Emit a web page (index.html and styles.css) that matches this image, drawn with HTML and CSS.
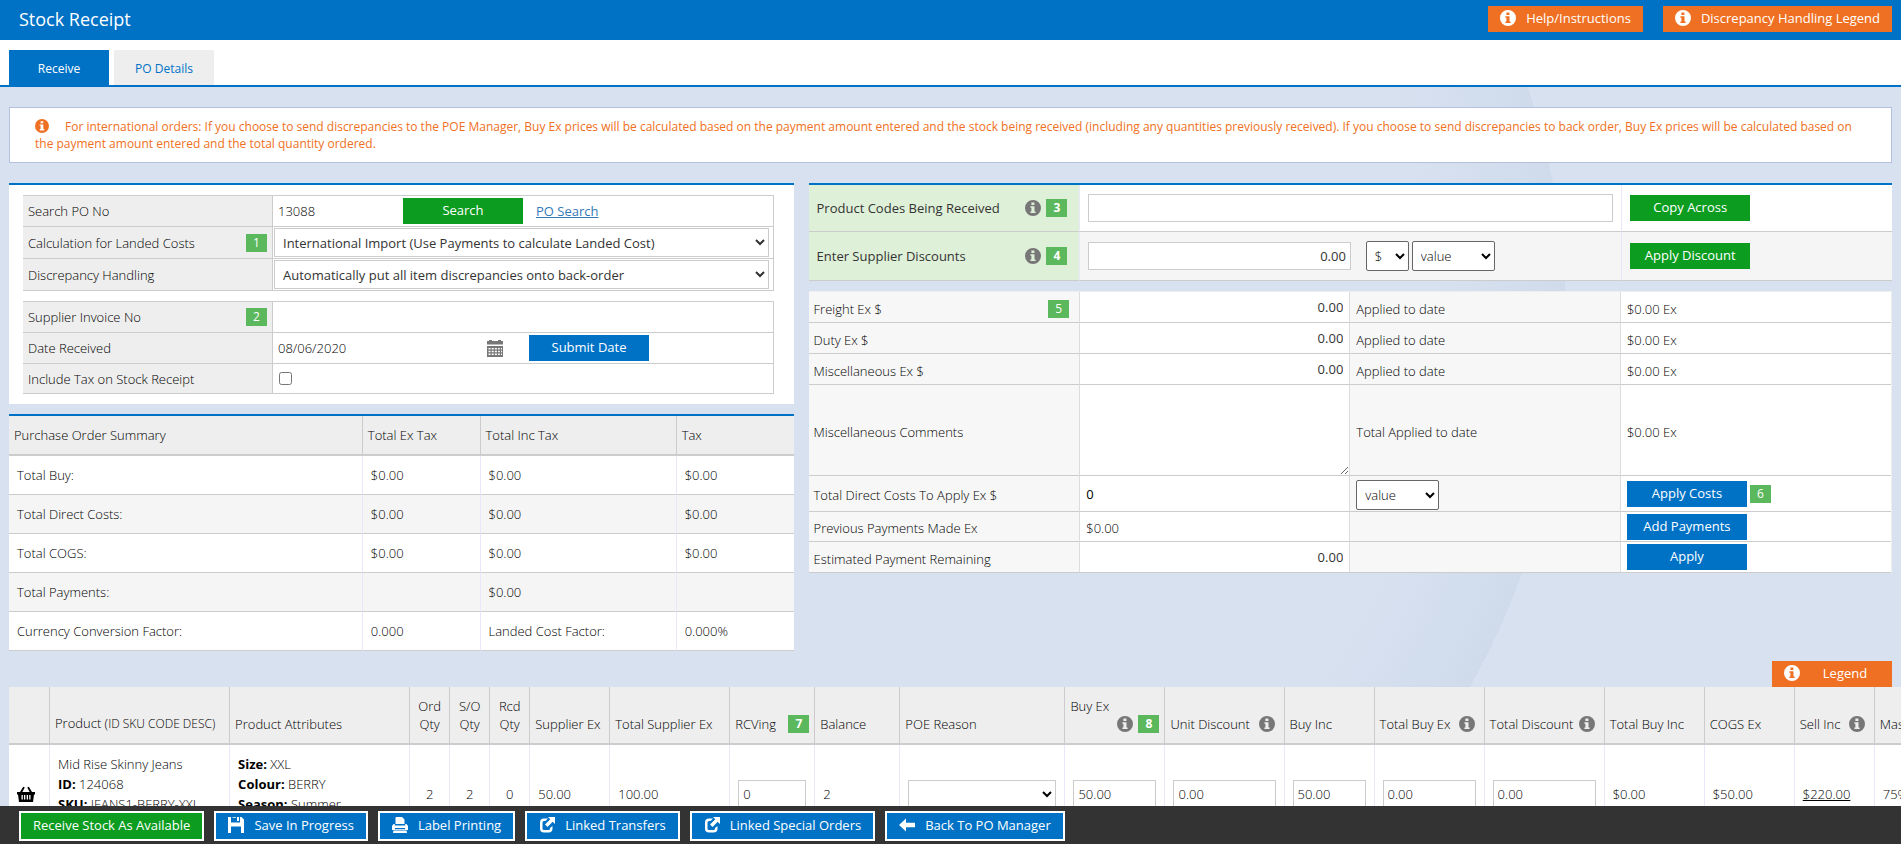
FILE: index.html
```html
<!DOCTYPE html>
<html lang="en">
<head>
<meta charset="utf-8">
<title>Stock Receipt</title>
<link rel="stylesheet" href="styles.css">
</head>
<body>
<svg class="defs" aria-hidden="true">
  <symbol id="i-info" viewBox="0 0 16 16"><path fill-rule="evenodd" d="M8 0a8 8 0 1 1 0 16A8 8 0 0 1 8 0zM6.4 2.6v2.3h3V2.6zM5.4 6.3v1.4h1v3.8h-1V13h5.2v-1.500h-1.100V6.300z"/></symbol>
  <symbol id="i-save" viewBox="0 0 16 16"><path fill-rule="evenodd" d="M0 0h3v5.500h9V0h1.500L16 2.500V16h-3V9.500H3V16H0zM9 0h2v4H9zM4.500 0H8v.8H4.500z"/></symbol>
  <symbol id="i-print" viewBox="0 0 16 16"><path fill-rule="evenodd" d="M4 0h6l2.500 2.500V7h-9V1zM1.500 7h1.300v1.500h10.400V7h1.300L16 9v4H0V9zM3 11v1.200h10V11zM1.500 13.500h13L15 16H1z"/></symbol>
  <symbol id="i-share" viewBox="0 0 16 16"><path d="M9 1.500H5Q1 1.500 1 5.500v6Q1 15.500 5 15.500h4.500q4 0 4-4V9l-2.500 2v.5q0 1.500-1.500 1.500H5q-1.500 0-1.500-1.500v-6Q3.500 4 5 4h1.500zM9 0h7v7l-2.300-2.300L8.500 10 6 7.500l5.300-5.200z"/></symbol>
  <symbol id="i-back" viewBox="0 0 16 16"><path d="M0 8l7-6.500v4.300h9v4.400H7v4.300z"/></symbol>
  <symbol id="i-cal" viewBox="0 0 16 17"><path fill-rule="evenodd" d="M0 1h2V0h3v1h6V0h3v1h2v3.500H0zM0 6h16v11H0zM1.500 8v1.500h2V8zM4.700 8v1.500h2V8zM7.900 8v1.500h2V8zM11.100 8v1.500h1.700V8zM14 8v1.500h1V8zM1.500 10.700v1.500h2v-1.500zM4.700 10.700v1.500h2v-1.500zM7.900 10.700v1.500h2v-1.500zM11.100 10.700v1.500h1.700v-1.500zM14 10.700v1.500h1v-1.500zM1.500 13.400v1.500h2v-1.500zM4.700 13.400v1.500h2v-1.500zM7.900 13.400v1.500h2v-1.500zM11.100 13.400v1.500h1.700v-1.500zM14 13.400v1.500h1v-1.500z"/></symbol>
  <symbol id="i-basket" viewBox="0 0 18 16"><path fill-rule="evenodd" d="M0 6h3L6.200.8 7.800 1.600 5.300 6h7.400L10.200 1.600 11.800.8 15 6h3v2.500h-1L16 16H2L1 8.500H0zM4.500 9v4.500h1.300V9zM7 9v4.500h1.300V9zM9.700 9v4.500H11V9zM12.200 9v4.500h1.300V9z"/></symbol>
</svg>

<div class="page">
  <header class="topbar">
    <h1>Stock Receipt</h1>
    <div class="topbar-actions">
      <button class="btn orange"><svg class="ico"><use href="#i-info"/></svg>Help/Instructions</button>
      <button class="btn orange"><svg class="ico"><use href="#i-info"/></svg>Discrepancy Handling Legend</button>
    </div>
  </header>
  <nav class="tabs">
    <a href="#receive" class="tab active">Receive</a>
    <a href="#details" class="tab">PO Details</a>
  </nav>

  <main class="content">
    <p class="notice"><svg class="ico"><use href="#i-info"/></svg>For international orders: If you choose to send discrepancies to the POE Manager, Buy Ex prices will be calculated based on the payment amount entered and the stock being received (including any quantities previously received). If you choose to send discrepancies to back order, Buy Ex prices will be calculated based on the payment amount entered and the total quantity ordered.</p>

    <div class="columns">
      <div class="left">
        <section class="panel">
          <table class="form">
            <tr>
              <td class="lbl"><label for="po">Search PO No</label></td>
              <td><div class="line"><input id="po" class="bare po" value="13088"><button class="btn green wide">Search</button><a class="link" href="#search">PO Search</a></div></td>
            </tr>
            <tr class="tall">
              <td class="lbl"><label for="calc">Calculation for Landed Costs</label><span class="badge">1</span></td>
              <td><select id="calc" class="full"><option>International Import (Use Payments to calculate Landed Cost)</option></select></td>
            </tr>
            <tr class="tall">
              <td class="lbl"><label for="disc">Discrepancy Handling</label></td>
              <td><select id="disc" class="full"><option>Automatically put all item discrepancies onto back-order</option></select></td>
            </tr>
          </table>
          <table class="form">
            <tr>
              <td class="lbl"><label for="inv">Supplier Invoice No</label><span class="badge">2</span></td>
              <td><input id="inv" class="bare"></td>
            </tr>
            <tr>
              <td class="lbl"><label for="date">Date Received</label></td>
              <td><div class="line"><input id="date" class="bare date" value="08/06/2020"><svg class="cal"><use href="#i-cal"/></svg><button class="btn blue wide">Submit Date</button></div></td>
            </tr>
            <tr class="short">
              <td class="lbl"><label for="tax">Include Tax on Stock Receipt</label></td>
              <td><input id="tax" type="checkbox" class="check"></td>
            </tr>
          </table>
        </section>

        <table class="summary">
          <thead><tr><th class="s1">Purchase Order Summary</th><th class="s2">Total Ex Tax</th><th class="s3">Total Inc Tax</th><th>Tax</th></tr></thead>
          <tbody>
            <tr><td>Total Buy:</td><td>$0.00</td><td>$0.00</td><td>$0.00</td></tr>
            <tr><td>Total Direct Costs:</td><td>$0.00</td><td>$0.00</td><td>$0.00</td></tr>
            <tr><td>Total COGS:</td><td>$0.00</td><td>$0.00</td><td>$0.00</td></tr>
            <tr><td>Total Payments:</td><td></td><td>$0.00</td><td></td></tr>
            <tr><td>Currency Conversion Factor:</td><td>0.000</td><td>Landed Cost Factor:</td><td>0.000%</td></tr>
          </tbody>
        </table>
      </div>

      <div class="right">
        <table class="codes">
          <tr>
            <td class="key"><div class="line"><label for="codes">Product Codes Being Received</label><svg class="ico grey"><use href="#i-info"/></svg><span class="badge bold">3</span></div></td>
            <td class="mid"><input id="codes" class="box"></td>
            <td class="act"><button class="btn green wide">Copy Across</button></td>
          </tr>
          <tr class="alt">
            <td class="key"><div class="line"><label for="supp">Enter Supplier Discounts</label><svg class="ico grey"><use href="#i-info"/></svg><span class="badge bold">4</span></div></td>
            <td class="mid"><div class="line"><input id="supp" class="box half" value="0.00"><select class="native cur" aria-label="Currency"><option>$</option></select><select class="native val" aria-label="Discount type"><option>value</option></select></div></td>
            <td class="act"><button class="btn green wide">Apply Discount</button></td>
          </tr>
        </table>

        <table class="costs">
          <tr><td class="k first"><div class="line"><label for="fr">Freight Ex $</label><span class="badge">5</span></div></td><td><input id="fr" class="bare num" value="0.00"></td><td class="k">Applied to date</td><td class="amt">$0.00 Ex</td></tr>
          <tr><td class="k first"><label for="du">Duty Ex $</label></td><td><input id="du" class="bare num" value="0.00"></td><td class="k">Applied to date</td><td class="amt">$0.00 Ex</td></tr>
          <tr><td class="k first"><label for="mi">Miscellaneous Ex $</label></td><td><input id="mi" class="bare num" value="0.00"></td><td class="k">Applied to date</td><td class="amt">$0.00 Ex</td></tr>
          <tr><td class="k first"><label for="mc">Miscellaneous Comments</label></td><td class="flush"><textarea id="mc"></textarea></td><td class="k">Total Applied to date</td><td class="amt">$0.00 Ex</td></tr>
          <tr class="r36"><td class="k first"><label for="td">Total Direct Costs To Apply Ex $</label></td><td><input id="td" class="bare dark" value="0"></td><td class="k"><select class="native val" aria-label="Cost type"><option>value</option></select></td><td><div class="line"><button class="btn blue wide">Apply Costs</button><span class="badge near">6</span></div></td></tr>
          <tr class="r30"><td class="k first">Previous Payments Made Ex</td><td class="amt">$0.00</td><td class="k"></td><td><button class="btn blue wide">Add Payments</button></td></tr>
          <tr><td class="k first"><label for="ep">Estimated Payment Remaining</label></td><td><input id="ep" class="bare num" value="0.00"></td><td class="k"></td><td><button class="btn blue wide">Apply</button></td></tr>
        </table>
      </div>
    </div>

    <div class="legend-row"><button class="btn orange legend"><svg class="ico"><use href="#i-info"/></svg><span>Legend</span></button></div>

    <div class="grid-wrap">
      <table class="grid">
        <colgroup><col class="w41"><col class="w180"><col class="w180"><col class="w40"><col class="w40"><col class="w40"><col class="w80"><col class="w120"><col class="w85"><col class="w85"><col class="w165"><col class="w100"><col class="w119"><col class="w90"><col class="w110"><col class="w120"><col class="w100"><col class="w90"><col class="w80"><col class="w100"></colgroup>
        <thead>
          <tr>
            <th></th><th>Product (<small>ID SKU CODE DESC)</small></th><th>Product Attributes</th>
            <th class="c">Ord<br>Qty</th><th class="c">S/O<br>Qty</th><th class="c">Rcd<br>Qty</th>
            <th>Supplier Ex</th><th>Total Supplier Ex</th>
            <th><div class="hd">RCVing<span class="badge bold">7</span></div></th><th>Balance</th><th>POE Reason</th>
            <th>Buy Ex<div class="hd end"><svg class="ico grey"><use href="#i-info"/></svg><span class="badge bold">8</span></div></th>
            <th><div class="hd">Unit Discount<svg class="ico grey"><use href="#i-info"/></svg></div></th><th>Buy Inc</th>
            <th><div class="hd">Total Buy Ex<svg class="ico grey"><use href="#i-info"/></svg></div></th>
            <th><div class="hd">Total Discount<svg class="ico grey"><use href="#i-info"/></svg></div></th>
            <th>Total Buy Inc</th><th>COGS Ex</th>
            <th><div class="hd">Sell Inc<svg class="ico grey"><use href="#i-info"/></svg></div></th><th>Mass</th>
          </tr>
        </thead>
        <tbody>
          <tr>
            <td><svg class="basket"><use href="#i-basket"/></svg></td>
            <td class="top">Mid Rise Skinny Jeans<br><b>ID:</b> 124068<br><b>SKU:</b> JEANS1-BERRY-XXL</td>
            <td class="top"><b>Size:</b> XXL<br><b>Colour:</b> BERRY<br><b>Season:</b> Summer</td>
            <td class="c">2</td><td class="c">2</td><td class="c">0</td><td>50.00</td><td>100.00</td>
            <td><input class="box" value="0" aria-label="Receiving"></td><td>2</td>
            <td><select class="box" aria-label="POE reason"><option></option></select></td>
            <td><input class="box" value="50.00" aria-label="Buy ex"></td>
            <td><input class="box" value="0.00" aria-label="Unit discount"></td>
            <td><input class="box" value="50.00" aria-label="Buy inc"></td>
            <td><input class="box" value="0.00" aria-label="Total buy ex"></td>
            <td><input class="box" value="0.00" aria-label="Total discount"></td>
            <td>$0.00</td><td>$50.00</td><td><a href="#sell">$220.00</a></td><td>75%</td>
          </tr>
        </tbody>
      </table>
    </div>
  </main>
</div>

<footer class="actions">
  <button class="btn green">Receive Stock As Available</button>
  <button class="btn blue"><svg class="ico"><use href="#i-save"/></svg>Save In Progress</button>
  <button class="btn blue"><svg class="ico"><use href="#i-print"/></svg>Label Printing</button>
  <button class="btn blue"><svg class="ico"><use href="#i-share"/></svg>Linked Transfers</button>
  <button class="btn blue"><svg class="ico"><use href="#i-share"/></svg>Linked Special Orders</button>
  <button class="btn blue"><svg class="ico"><use href="#i-back"/></svg>Back To PO Manager</button>
</footer>
</body>
</html>
```

FILE: styles.css
```css
* { box-sizing: border-box; }
body { margin: 0; font: 300 13px/18px "Open Sans", "Noto Sans", sans-serif; color: #000; background: #d8e1f0; }
.defs { position: absolute; width: 0; height: 0; }
svg { fill: currentColor; }
button, input, select, textarea { font: inherit; color: #000; }
table { border-collapse: separate; border-spacing: 0; width: 100%; table-layout: fixed; }
td, th { padding: 0; text-align: left; font-weight: inherit; }

.page { min-height: 100vh; overflow-x: hidden; background: radial-gradient(circle 740px at 0 322px, transparent 82%, #cfdbeb 100%, transparent 100%) 826px 0 no-repeat; }
.topbar { display: flex; justify-content: space-between; align-items: center; height: 40px; padding: 0 9px 3px 19px; background: #0072c6; color: #fff; }
.topbar h1 { margin: 0; font-size: 18px; line-height: 24px; font-weight: 400; }
.topbar-actions { display: flex; gap: 20px; }

.btn { display: inline-flex; align-items: center; justify-content: center; height: 26px; padding: 0 12px 2px; border: 0; color: #fff; font-size: 13px; font-weight: 500; white-space: nowrap; cursor: pointer; }
.btn .ico { margin-right: 10px; }
.ico { width: 16px; height: 16px; flex: none; }
.grey { color: #777; }
.orange { background: #ef7022; font-weight: 400; }
.green { background: #0b9c20; }
.blue { background: #0072c6; }
.wide { width: 120px; flex: none; }

.tabs { display: flex; gap: 5px; padding: 10px 9px 0; background: #fff; border-bottom: 2px solid #0072c6; }
.tab { width: 100px; height: 35px; line-height: 37px; font-size: 12px; font-weight: 400; text-align: center; text-decoration: none; background: #eee; color: #0072c6; }
.tab.active { background: #0072c6; color: #fff; font-weight: 500; }

.content { padding: 20px 0 0 9px; }
.notice { margin: 0 9px 20px 0; padding: 10px 25px; border: 1px solid #b3c0e0; background: #fff; color: #ef7022; font-size: 12px; line-height: 17px; font-weight: 400; }
.notice .ico { width: 14px; height: 14px; margin-right: 16px; vertical-align: -2px; }

.columns { display: grid; grid-template-columns: 42fr 58fr; gap: 15px; margin-right: 9px; align-items: start; }
.left, .right { display: grid; gap: 10px; }
.line { display: flex; align-items: center; }
.badge { display: inline-block; width: 21px; height: 18px; flex: none; background: #5cb85c; color: #fff; font-size: 12px; line-height: 18px; font-weight: 500; text-align: center; }
.badge.bold { font-weight: 700; }

.panel { display: grid; gap: 10px; padding: 10px 20px 10px 14px; border-top: 2px solid #0072c6; background: #fff; }
.form { border-top: 1px solid #ccc; border-right: 1px solid #ccc; }
.form td { height: 31px; border-bottom: 1px solid #ccc; }
.form .tall td { height: 32px; }
.form .short td { height: 30px; }
.form .lbl { width: 250px; padding: 0 5px; border-right: 1px solid #ccc; background: #eee; }
.lbl .badge { float: right; }
.bare { display: block; width: 100%; height: 24px; padding: 0 5px; border: 0; background: transparent; }
.line .po { width: 130px; }
.line .date { width: 214px; }
.cal { width: 16px; height: 17px; margin-right: 26px; color: #777; }
.link { margin-left: 13px; color: #337ab7; font-weight: 400; }
.full { display: block; width: 99%; height: 29px; margin-left: 1px; padding: 0 4px; border: 1px solid #ccc; border-radius: 0; background: #fff; color: #333; font-weight: 400; }
.check { display: block; margin: 0 0 0 6px; }

.summary { border-top: 2px solid #0072c6; }
.summary th { height: 40px; padding: 0 5px; border-bottom: 2px solid #ccc; border-right: 1px solid #ccc; background: #eee; }
.summary td { height: 39px; padding: 0 8px; border-bottom: 1px solid #ccc; border-right: 1px solid #e8e8fb; background: #fff; }
.summary tr > :last-child { border-right: 0; }
.summary tbody tr:nth-child(even) td { background: #f5f5f5; }
.s1 { width: 45.1%; }
.s2 { width: 15%; }
.s3 { width: 25%; }

.codes { border-top: 2px solid #0072c6; }
.codes td { height: 47px; padding: 0 8px; border-bottom: 1px solid #ccc; background: #fff; }
.codes .alt td { height: 49px; background: #f5f5f5; }
.codes td.key { width: 25.1%; border-right: 1px solid #e8e8fb; background: #dff0d8; color: #333; font-weight: 400; }
.codes .alt td.key { background: #dff0d8; }
.codes .mid { width: 50%; border-right: 1px solid #e8e8fb; }
.key label { margin-right: auto; }
.key .ico { margin-right: 5px; }
.key .badge { margin-right: 4px; }
.box { display: block; width: 100%; height: 28px; padding: 0 4px; border: 1px solid #ccc; border-radius: 0; background: #fff; }
.half { width: 50%; margin-right: 15px; text-align: right; color: #333; font-weight: 400; }
.native { height: 30px; padding: 0 4px; border: 1px solid #666; border-radius: 2px; background: #fff; }
.cur { width: 43px; margin-right: 3px; }
.val { width: 83px; }

.costs { border-top: 1px solid #eee; border-right: 1px solid #eee; }
.costs td { height: 31px; padding: 0 6px; border-bottom: 1px solid #ccc; border-right: 1px solid #ddd; background: #fff; }
.costs td:last-child { border-right: 0; }
.costs .k { width: 25%; padding-top: 3px; background: #f7f7f7; }
.costs .amt { padding-top: 3px; }
.costs .first { width: 25.1%; padding-left: 5px; }
.costs .r36 td { height: 36px; }
.costs .r30 td { height: 30px; }
.costs .bare { padding: 0; }
.costs .num { text-align: right; color: #333; font-weight: 400; }
.costs .k .badge { margin-left: auto; margin-right: 4px; }
.costs .dark { font-weight: 400; }
.costs .near { margin-left: 3px; }
.costs .flush { padding: 0; }
textarea { display: block; width: 100%; height: 90px; border: 0; background: transparent; }

.legend-row { display: flex; justify-content: flex-end; margin: 10px 9px 0 0; }
.legend { width: 120px; padding: 0 12px 2px; justify-content: flex-start; }
.legend span { flex: 1; }

.grid-wrap { overflow: hidden; }
.grid { width: 1966px; }
.grid th { height: 58px; padding: 0 5px 10px; vertical-align: bottom; border-bottom: 2px solid #ccc; border-right: 1px solid #ccc; background: #eee; white-space: nowrap; }
.grid td { height: 98px; padding: 0 8px; border-right: 1px solid #e8e8fb; background: #fff; line-height: 20px; white-space: nowrap; }
.grid small { font-size: 12px; }
.grid .c { padding-left: 0; padding-right: 0; text-align: center; }
.grid td.top { padding-top: 9px; vertical-align: top; }
.grid b { font-weight: 700; }
.grid td a { color: inherit; }
.hd { display: flex; align-items: center; justify-content: space-between; }
.hd.end { justify-content: flex-end; gap: 5px; }
.hd > .ico:last-child { margin-right: 4px; }
.basket { display: block; width: 18px; height: 16px; }
.w40 { width: 40px; } .w41 { width: 41px; } .w80 { width: 80px; } .w85 { width: 85px; } .w90 { width: 90px; }
.w100 { width: 100px; } .w110 { width: 110px; } .w119 { width: 119px; } .w120 { width: 120px; } .w165 { width: 165px; } .w180 { width: 180px; }

.actions { position: fixed; left: 0; right: 0; bottom: 0; display: flex; gap: 10px; padding: 5px 19px 3px; background: #333; }
.actions .btn { height: 30px; padding: 0 12px 2px; border: 2px solid #fff; font-weight: 400; }
```
